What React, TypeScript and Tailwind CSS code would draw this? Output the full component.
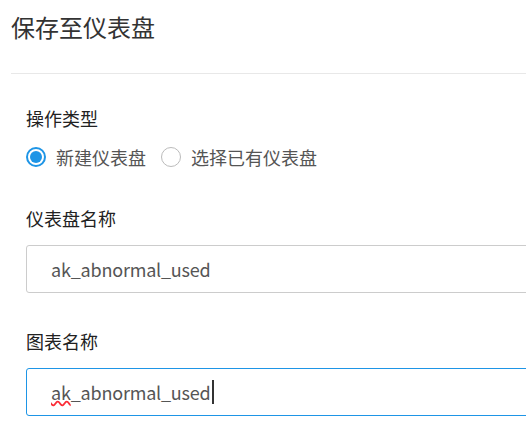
export default function App() {
  const font = { fontFamily: '"Microsoft YaHei", "Noto Sans CJK SC", "Noto Sans", sans-serif' };
  return (
    <div className="w-[526px] h-[438px] bg-white overflow-hidden" style={font}>
      <div className="pl-[11px] pt-[9px] h-[73px]">
        <h1 className="text-[24px] leading-[36px] text-[#333] font-normal">保存至仪表盘</h1>
      </div>
      <div className="ml-[11px] h-px bg-[#e8e8e8]" />
      <div className="pl-[26px] pt-[32px]">
        <div className="text-[18px] leading-[24px] text-[#222]">操作类型</div>
        <div className="flex items-center mt-[14px] h-[26px]">
          <label className="flex items-center">
            <span className="w-[20px] h-[20px] rounded-full border-2 border-[#1e95e6] flex items-center justify-center">
              <span className="w-[12px] h-[12px] rounded-full bg-[#1e95e6]" />
            </span>
            <span className="ml-[10px] text-[18px] text-[#555]">新建仪表盘</span>
          </label>
          <label className="flex items-center ml-[15px]">
            <span className="w-[20px] h-[20px] rounded-full border border-[#bbb]" />
            <span className="ml-[10px] text-[18px] text-[#555]">选择已有仪表盘</span>
          </label>
        </div>
        <div className="mt-[36px] text-[18px] leading-[24px] text-[#222]">仪表盘名称</div>
        <div className="mt-[15px] h-[48px] w-[520px] border border-[#ccc] rounded-[3px] flex items-center pl-[24px] text-[18px] tracking-[-0.2px] text-[#555]">
          ak_abnormal_used
        </div>
        <div className="mt-[36px] text-[18px] leading-[24px] text-[#222]">图表名称</div>
        <div className="mt-[15px] h-[48px] w-[520px] border border-[#1e95e6] rounded-[3px] flex items-center pl-[24px] text-[18px] tracking-[-0.2px] text-[#555]">
          <span className="underline decoration-wavy decoration-red-500 [text-decoration-skip-ink:none]">ak</span>
          <span>_abnormal_used</span>
          <span className="w-[2px] h-[24px] bg-[#333] ml-px" />
        </div>
      </div>
    </div>
  );
}
